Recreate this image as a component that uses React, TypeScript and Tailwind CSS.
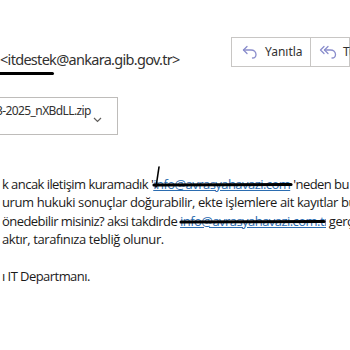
import React from "react";

function ReplyIcon({ double = false }: { double?: boolean }) {
  return (
    <svg width="18" height="16" viewBox="0 0 18 16" fill="none" stroke="#8a8dcc" strokeWidth={1.3} strokeLinecap="round" strokeLinejoin="round">
      {double && <path d="M5 2.5L1.5 6L5 9.5" />}
      <path d={double ? "M9 2.5L5.5 6L9 9.5" : "M6 2.5L2.5 6L6 9.5"} />
      <path d={double ? "M5.5 6H11.5C14.5 6 16.5 8 16.5 10.5C16.5 12.5 15 14 13 14" : "M2.5 6H10C13 6 15 8 15 10.5C15 12.5 13.5 14 11.5 14"} />
    </svg>
  );
}

function Redacted({ text, width, pen = false }: { text: string; width: number; pen?: boolean }) {
  return (
    <span className="relative inline-block" style={{ width }}>
      <span className="text-[#2b6cb0] underline decoration-[#2b6cb0] whitespace-nowrap overflow-hidden inline-block align-bottom" style={{ width }}>
        {text}
      </span>
      <svg className="absolute left-0 top-0 overflow-visible" width={width} height="18" viewBox={`0 0 ${width} 18`}>
        <path d={`M1 10 L${width - 2} 9.5`} stroke="#000" strokeWidth={3.2} strokeLinecap="round" />
        {pen && <path d="M6 -8 L3 12" stroke="#000" strokeWidth={1.6} strokeLinecap="round" />}
      </svg>
    </span>
  );
}

export default function App() {
  return (
    <div className="w-[350px] h-[350px] bg-white overflow-hidden relative text-[#252423]">
      <div className="h-[37px]" />
      <div className="flex items-start justify-between">
        <div className="pt-[12px] whitespace-nowrap font-['Noto_Sans',sans-serif] text-[14.5px] leading-[20px] tracking-[-0.7px] text-[#323130]">
          <div>&lt;itdestek@ankara.gib.gov.tr&gt;</div>
          <div className="h-[3px] w-[56px] bg-black rounded-full mt-[3px] ml-[-2px]" />
        </div>
        <div className="flex h-[30px] border border-[#c8c6c4] font-['Noto_Sans',sans-serif] text-[12px] text-[#323130] ml-auto w-[119px] shrink-0">
          <div className="flex items-center gap-[6px] pl-[9px] w-[79px] border-r border-[#c8c6c4] shrink-0">
            <ReplyIcon />
            <span>Yanıtla</span>
          </div>
          <div className="flex items-center gap-[6px] pl-[8px] shrink-0">
            <ReplyIcon double />
            <span>Tümünü Yanıtla</span>
          </div>
        </div>
      </div>

      <div className="mt-[22px] w-[118px] h-[38px] border border-[#bebcba] border-l-0 flex items-center justify-between pr-[15px] font-['Noto_Sans',sans-serif] text-[12px] tracking-[-0.6px] text-[#323130] overflow-hidden">
        <span className="whitespace-nowrap -mt-[10px] ml-[-4px]">3-2025_nXBdLL.zip</span>
        <svg width="9" height="6" viewBox="0 0 9 6" className="mt-[7px] shrink-0" fill="none" stroke="#605e5c" strokeWidth={1.2}>
          <path d="M1 1L4.5 4.5L8 1" />
        </svg>
      </div>

      <div className="mt-[40px] font-['Open_Sans',sans-serif] text-[13px] leading-[18.3px] tracking-[-0.55px] text-[#1b1a19] whitespace-nowrap pl-[2px]">
        <div>
          k ancak iletişim kuramadık '<Redacted text="info@avrasyahavazi.com" width={140} pen />'neden bu ekte
        </div>
        <div className="tracking-[-0.4px]">urum hukuki sonuçlar doğurabilir, ekte işlemlere ait kayıtlar bulunmaktadır</div>
        <div>
          önedebilir misiniz? aksi takdirde <Redacted text="info@avrasyahavazi.com.tr" width={146} /> gerçekleşecektir
        </div>
        <div className="tracking-[-0.4px]">aktır, tarafınıza tebliğ olunur.</div>
        <div className="h-[18.5px]" />
        <div>ı IT Departmanı.</div>
      </div>
    </div>
  );
}
